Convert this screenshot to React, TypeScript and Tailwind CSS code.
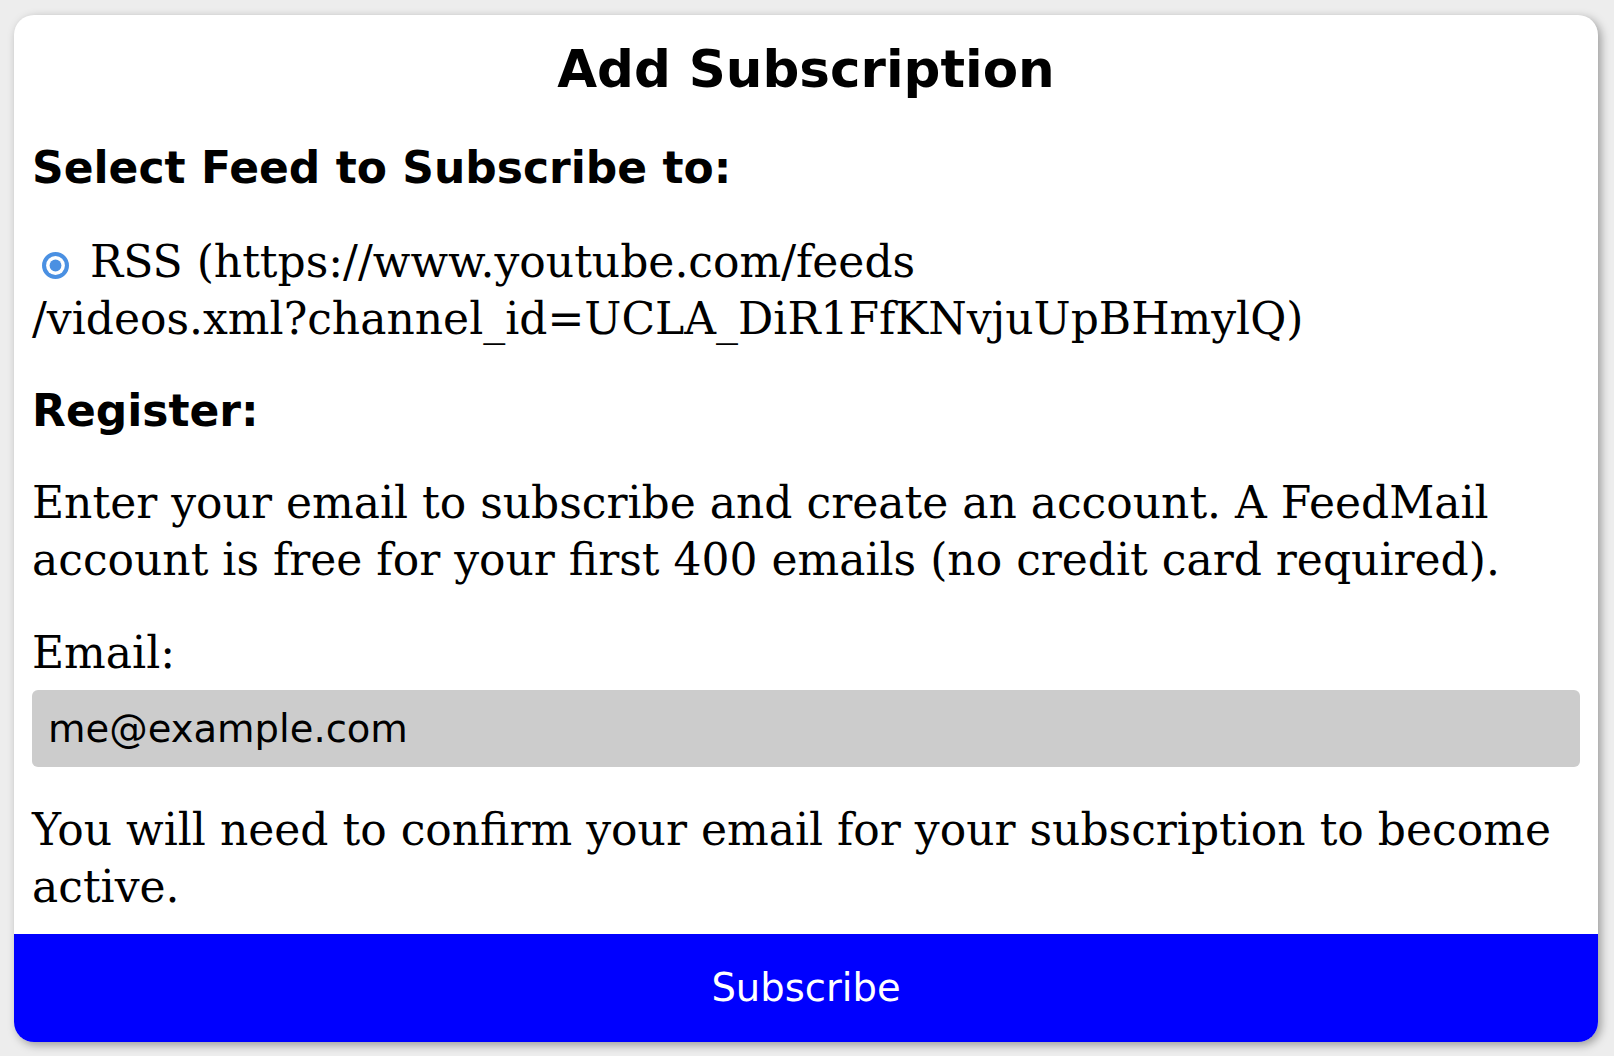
import React from 'react';

/**
 * Add Subscription card - feed picker plus email registration
 */
function RadioDot() {
  return (
    <svg
      width="27"
      height="27"
      viewBox="0 0 27 27"
      className="inline-block align-middle ml-[10px] mr-[7px]"
    >
      <circle cx="13.5" cy="13.5" r="13.5" fill="#4a90e2" />
      <circle cx="13.5" cy="13.5" r="9.4" fill="#ffffff" />
      <circle cx="13.5" cy="13.5" r="5.9" fill="#4a90e2" />
    </svg>
  );
}

export default function App() {
  return (
    <div className="min-h-screen w-full bg-[#ededed] pt-[15px] pl-[14px] pb-[14px]">
      <div className="w-[1584px] bg-white rounded-[20px] overflow-hidden shadow-[3px_3px_10px_rgba(0,0,0,0.35)] flex flex-col text-black">
        <div className="px-[18px] pt-[24px] font-['DejaVu_Serif',serif] text-[44px] leading-[57px]">
          <h1 className="text-center font-['DejaVu_Sans',sans-serif] font-bold text-[51.5px] leading-[60px]">
            Add Subscription
          </h1>

          <h3 className="mt-[43px] font-['DejaVu_Sans',sans-serif] font-bold text-[44px] leading-[51px]">
            Select Feed to Subscribe to:
          </h3>

          <p className="mt-[41px] leading-[56.5px]">
            <RadioDot />{' '}
            RSS (https://www.youtube.com/feeds
            <br />
            /videos.xml?channel_id=UCLA_DiR1FfKNvjuUpBHmylQ)
          </p>

          <h3 className="mt-[38px] font-['DejaVu_Sans',sans-serif] font-bold text-[44px] leading-[51px]">
            Register:
          </h3>

          <p className="mt-[38px]">
            Enter your email to subscribe and create an account. A FeedMail account is free for your
            first 400 emails (no credit card required).
          </p>

          <label htmlFor="email" className="block mt-[36px]">
            Email:
          </label>
          <input
            id="email"
            type="email"
            placeholder="me@example.com"
            className="mt-[9px] block w-full h-[77px] rounded-[6px] bg-[#cccccc] pl-[16px] font-['DejaVu_Sans',sans-serif] text-[38.5px] text-black placeholder:text-black outline-none"
          />

          <p className="mt-[34px]">
            You will need to confirm your email for your subscription to become active.
          </p>
        </div>

        <button className="mt-[19px] h-[108px] w-full bg-[#0000ff] text-white font-['DejaVu_Sans',sans-serif] text-[38.5px]">
          Subscribe
        </button>
      </div>
    </div>
  );
}
